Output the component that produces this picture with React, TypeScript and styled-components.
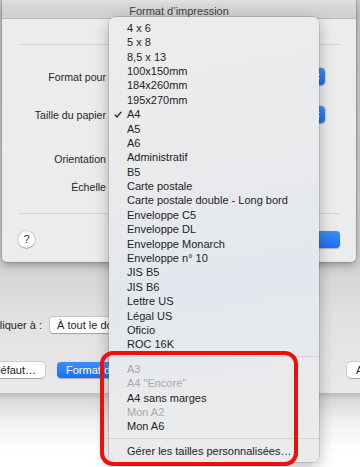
import React from 'react';
import styled, { createGlobalStyle } from 'styled-components';

const GlobalStyle = createGlobalStyle`
  html, body {
    margin: 0;
    padding: 0;
  }
  body {
    width: 360px;
    height: 467px;
    overflow: hidden;
    background: #fff;
    font-family: "Liberation Sans", Arial, sans-serif;
    -webkit-font-smoothing: antialiased;
  }
`;

const Screen = styled.div`
  position: relative;
  width: 360px;
  height: 467px;
  overflow: hidden;
  display: flex;
  flex-direction: column;
`;

const PrintWindow = styled.div`
  height: 393px;
  flex-shrink: 0;
  display: flex;
  flex-direction: column;
  background: linear-gradient(180deg, #cbcbcb 0px, #d3d3d3 262px, #e2e2e2 320px, #e9e9e9 393px);
`;

const Desktop = styled.div`
  flex: 1;
  background: linear-gradient(180deg, #bcbcbc 0px, #d9d9d9 7px, #f1f1f1 28px, #ffffff 60px);
`;

const PageSetup = styled.div`
  margin: 0 4px 0 2px;
  height: 262px;
  display: flex;
  flex-direction: column;
  border-radius: 0 0 5px 5px;
  overflow: hidden;
  box-shadow: 0 3px 10px rgba(0, 0, 0, 0.32), 0 0 0 0.5px rgba(0, 0, 0, 0.25);
`;

const TitleBar = styled.div`
  height: 19px;
  flex-shrink: 0;
  box-sizing: border-box;
  display: flex;
  align-items: center;
  justify-content: center;
  padding-top: 3px;
  border-bottom: 1px solid #b9b9b9;
  background: linear-gradient(180deg, #e1e1e1 0px, #d9d9d9 4px, #d6d6d6 5px, #d0d0d0 19px);
  color: #404040;
  font-size: 11px;
`;

const SheetBody = styled.div`
  flex: 1;
  display: flex;
  flex-direction: column;
  padding: 0 16px;
  background: #ececec;
`;

const Divider = styled.div<{ $top: number }>`
  height: 1px;
  margin-top: ${(p) => p.$top}px;
  background: #d4d4d4;
`;

const FormRow = styled.div<{ $top: number; $h: number }>`
  display: flex;
  align-items: center;
  gap: 4px;
  height: ${(p) => p.$h}px;
  margin-top: ${(p) => p.$top}px;
`;

const Label = styled.div`
  width: 88px;
  flex-shrink: 0;
  display: flex;
  justify-content: flex-end;
  white-space: nowrap;
  font-size: 10.6px;
  color: #262626;
`;

const Popup = styled.div`
  position: relative;
  width: 215px;
  height: 17px;
  box-sizing: border-box;
  display: flex;
  justify-content: flex-end;
  border-radius: 4px;
  background: #fff;
  box-shadow: 0 0 0 0.5px rgba(0, 0, 0, 0.2), 0 0.5px 1px rgba(0, 0, 0, 0.2);
`;

const Stepper = styled.div`
  width: 16px;
  height: 17px;
  border-radius: 0 4px 4px 0;
  background: linear-gradient(180deg, #3e91f9, #1b6fef);
  display: flex;
  align-items: center;
  justify-content: center;
`;

const Field = styled.div`
  width: 60px;
  height: 16px;
  background: #fff;
  box-shadow: 0 0 0 0.5px rgba(0, 0, 0, 0.25);
`;

const BottomRow = styled.div`
  display: flex;
  align-items: center;
  justify-content: space-between;
  margin-top: 16px;
  height: 18px;
`;

const HelpButton = styled.div`
  width: 17px;
  height: 17px;
  border-radius: 50%;
  background: #fff;
  box-shadow: 0 0 0 0.5px rgba(0, 0, 0, 0.3), 0 1px 1px rgba(0, 0, 0, 0.15);
  display: flex;
  align-items: center;
  justify-content: center;
  font-size: 11px;
  color: #333;
`;

const Button = styled.div<{ $primary?: boolean }>`
  height: 16px;
  padding: 0 9px;
  box-sizing: border-box;
  display: flex;
  align-items: center;
  border-radius: 4px;
  white-space: nowrap;
  font-size: 11px;
  color: ${(p) => (p.$primary ? '#fff' : '#262626')};
  background: ${(p) => (p.$primary ? 'linear-gradient(180deg, #3c8ff8, #1c6ff0)' : '#fff')};
  box-shadow: ${(p) =>
    p.$primary ? '0 0.5px 1px rgba(0,0,0,0.25)' : '0 0 0 0.5px rgba(0,0,0,0.2), 0 0.5px 1px rgba(0,0,0,0.2)'};
`;

const WideButton = styled(Button)`
  width: 62px;
  height: 17px;
  justify-content: center;
`;

const ApplyRow = styled.div`
  display: flex;
  align-items: center;
  gap: 8px;
  height: 16px;
  margin-top: 55px;
`;

const Edge = styled.div<{ $w: number; $end?: boolean }>`
  width: ${(p) => p.$w}px;
  flex-shrink: 0;
  display: flex;
  justify-content: ${(p) => (p.$end ? 'flex-end' : 'flex-start')};
  white-space: nowrap;
  font-size: 11px;
  color: #262626;
`;

const SelectBox = styled.div`
  width: 200px;
  height: 16px;
  padding-left: 7px;
  box-sizing: border-box;
  display: flex;
  align-items: center;
  border-radius: 3px;
  background: #fff;
  box-shadow: 0 0 0 0.5px rgba(0, 0, 0, 0.2), 0 0.5px 1px rgba(0, 0, 0, 0.2);
  font-size: 11px;
  color: #262626;
`;

const ButtonRow = styled.div`
  display: flex;
  align-items: center;
  gap: 12px;
  height: 16px;
  margin-top: 29px;
`;

const Spacer = styled.div`
  flex: 1;
`;

const Menu = styled.div`
  position: absolute;
  left: 109px;
  top: 17px;
  width: 210px;
  padding: 3.8px 0;
  display: flex;
  flex-direction: column;
  border-radius: 6px;
  background: linear-gradient(170deg, #ececec 0%, #e9eaec 35%, #e2e8ee 60%, #e8eaec 80%, #ebebeb 100%);
  box-shadow: 0 0 0 0.5px rgba(0, 0, 0, 0.22), 0 5px 16px rgba(0, 0, 0, 0.28);
`;

const Item = styled.div<{ $disabled?: boolean }>`
  position: relative;
  height: 14.4px;
  line-height: 14.4px;
  padding-left: 18px;
  white-space: nowrap;
  font-size: 11px;
  color: ${(p) => (p.$disabled ? '#a8a8a8' : '#232323')};
`;

const Check = styled.svg`
  position: absolute;
  left: 5px;
  top: 4px;
`;

const MenuSeparator = styled.div`
  height: 10px;
  display: flex;
  align-items: center;

  &::after {
    content: '';
    flex: 1;
    height: 1px;
    background: #d2d2d2;
  }
`;

const Annotation = styled.div`
  position: absolute;
  left: 100px;
  top: 351px;
  width: 198px;
  height: 115px;
  box-sizing: border-box;
  border: 4.5px solid #f20d0d;
  border-radius: 13px;
`;

type Entry = { label?: string; disabled?: boolean; checked?: boolean; sep?: boolean };

const entries: Entry[] = [
  { label: '4 x 6' },
  { label: '5 x 8' },
  { label: '8,5 x 13' },
  { label: '100x150mm' },
  { label: '184x260mm' },
  { label: '195x270mm' },
  { label: 'A4', checked: true },
  { label: 'A5' },
  { label: 'A6' },
  { label: 'Administratif' },
  { label: 'B5' },
  { label: 'Carte postale' },
  { label: 'Carte postale double - Long bord' },
  { label: 'Enveloppe C5' },
  { label: 'Enveloppe DL' },
  { label: 'Enveloppe Monarch' },
  { label: 'Enveloppe n° 10' },
  { label: 'JIS B5' },
  { label: 'JIS B6' },
  { label: 'Lettre US' },
  { label: 'Légal US' },
  { label: 'Oficio' },
  { label: 'ROC 16K' },
  { sep: true },
  { label: 'A3', disabled: true },
  { label: 'A4 "Encore"', disabled: true },
  { label: 'A4 sans marges' },
  { label: 'Mon A2', disabled: true },
  { label: 'Mon A6' },
  { sep: true },
  { label: 'Gérer les tailles personnalisées…' },
];

const Arrows = () => (
  <svg width="8" height="11" viewBox="0 0 8 11">
    <path d="M1.5 4 L4 1.5 L6.5 4 M1.5 7 L4 9.5 L6.5 7" fill="none" stroke="#fff" strokeWidth="1.2" />
  </svg>
);

const App = () => (
  <Screen>
    <GlobalStyle />
    <PrintWindow>
      <PageSetup>
        <TitleBar>Format d’impression</TitleBar>
        <SheetBody>
          <Divider $top={25} />
          <FormRow $top={23} $h={17}>
            <Label>Format pour</Label>
            <Popup>
              <Stepper>
                <Arrows />
              </Stepper>
            </Popup>
          </FormRow>
          <FormRow $top={21} $h={17}>
            <Label>Taille du papier</Label>
            <Popup>
              <Stepper>
                <Arrows />
              </Stepper>
            </Popup>
          </FormRow>
          <FormRow $top={27} $h={18}>
            <Label>Orientation</Label>
          </FormRow>
          <FormRow $top={10} $h={18}>
            <Label>Échelle</Label>
            <Field />
          </FormRow>
          <Divider $top={17} />
          <BottomRow>
            <HelpButton>?</HelpButton>
            <WideButton $primary>OK</WideButton>
          </BottomRow>
        </SheetBody>
      </PageSetup>
      <ApplyRow>
        <Edge $w={42} $end>
          Appliquer à :
        </Edge>
        <SelectBox>À tout le document</SelectBox>
      </ApplyRow>
      <ButtonRow>
        <Edge $w={45} $end>
          <Button>Par défaut…</Button>
        </Edge>
        <Button $primary>Format d’impression…</Button>
        <Spacer />
        <Edge $w={13}>
          <Button>Annuler</Button>
        </Edge>
      </ButtonRow>
    </PrintWindow>
    <Desktop />
    <Menu>
      {entries.map((e, i) =>
        e.sep ? (
          <MenuSeparator key={i} />
        ) : (
          <Item key={i} $disabled={e.disabled}>
            {e.checked && (
              <Check width="8" height="7" viewBox="0 0 8 7">
                <path d="M0.8 3.6 L3 6 L7.3 0.8" fill="none" stroke="#232323" strokeWidth="1.3" />
              </Check>
            )}
            {e.label}
          </Item>
        ),
      )}
    </Menu>
    <Annotation />
  </Screen>
);

export default App;
